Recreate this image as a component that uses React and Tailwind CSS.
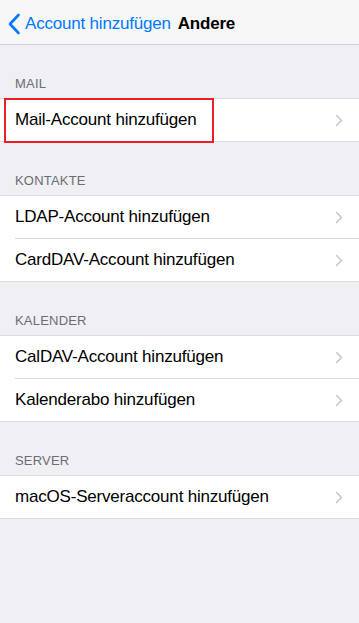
import React from "react";

const font = { fontFamily: '"Liberation Sans", Arial, sans-serif' };

function Chevron() {
  return (
    <svg width="8" height="13" viewBox="0 0 8 13" className="shrink-0">
      <path d="M1.5 1.5 L6.5 6.5 L1.5 11.5" fill="none" stroke="#c7c7cc" strokeWidth="1.6" strokeLinecap="round" strokeLinejoin="round" />
    </svg>
  );
}

function Header({ label }) {
  return (
    <div className="h-[53px] flex items-end pl-[15px] pb-[6px]">
      <span className="text-[13px] leading-[16px] text-[#6d6d72] tracking-[0.2px]">{label}</span>
    </div>
  );
}

function Row({ text, last, highlight }) {
  return (
    <div className="relative bg-white">
      <div className="flex items-center h-[42px] pl-[15px]">
        <span className="flex-1 text-[17px] text-black tracking-[-0.2px]">{text}</span>
        <div className="pr-[16px] flex items-center">
          <Chevron />
        </div>
      </div>
      {!last && <div className="ml-[15px] h-px bg-[#dcdce0]" />}
      {highlight && (
        <div className="absolute left-[4px] -top-px w-[210px] h-[45px] border-2 border-[#ee1c24] pointer-events-none" />
      )}
    </div>
  );
}

function Group({ rows, highlightFirst }) {
  return (
    <div className="bg-white border-t border-b border-[#dcdce0]">
      {rows.map((r, i) => (
        <Row key={r} text={r} last={i === rows.length - 1} highlight={highlightFirst && i === 0} />
      ))}
    </div>
  );
}

export default function App() {
  return (
    <div className="w-[359px] h-[623px] bg-[#efeff4] overflow-hidden" style={font}>
      <div className="h-[45px] pt-[4px] bg-[#f7f7f7] border-b border-[#d0d0d4] flex items-center">
        <div className="flex items-center pl-[8px]">
          <svg width="13" height="22" viewBox="0 0 13 22">
            <path d="M10.5 2 L2 11 L10.5 20" fill="none" stroke="#007aff" strokeWidth="2.6" strokeLinecap="round" strokeLinejoin="round" />
          </svg>
          <span className="ml-[4px] text-[17px] text-[#007aff] tracking-[-0.2px]">Account hinzufügen</span>
        </div>
        <span className="ml-[7px] text-[17px] font-bold text-black tracking-[-0.2px]">Andere</span>
      </div>

      <Header label="MAIL" />
      <Group rows={["Mail-Account hinzufügen"]} highlightFirst />

      <Header label="KONTAKTE" />
      <Group rows={["LDAP-Account hinzufügen", "CardDAV-Account hinzufügen"]} />

      <Header label="KALENDER" />
      <Group rows={["CalDAV-Account hinzufügen", "Kalenderabo hinzufügen"]} />

      <Header label="SERVER" />
      <Group rows={["macOS-Serveraccount hinzufügen"]} />
    </div>
  );
}
